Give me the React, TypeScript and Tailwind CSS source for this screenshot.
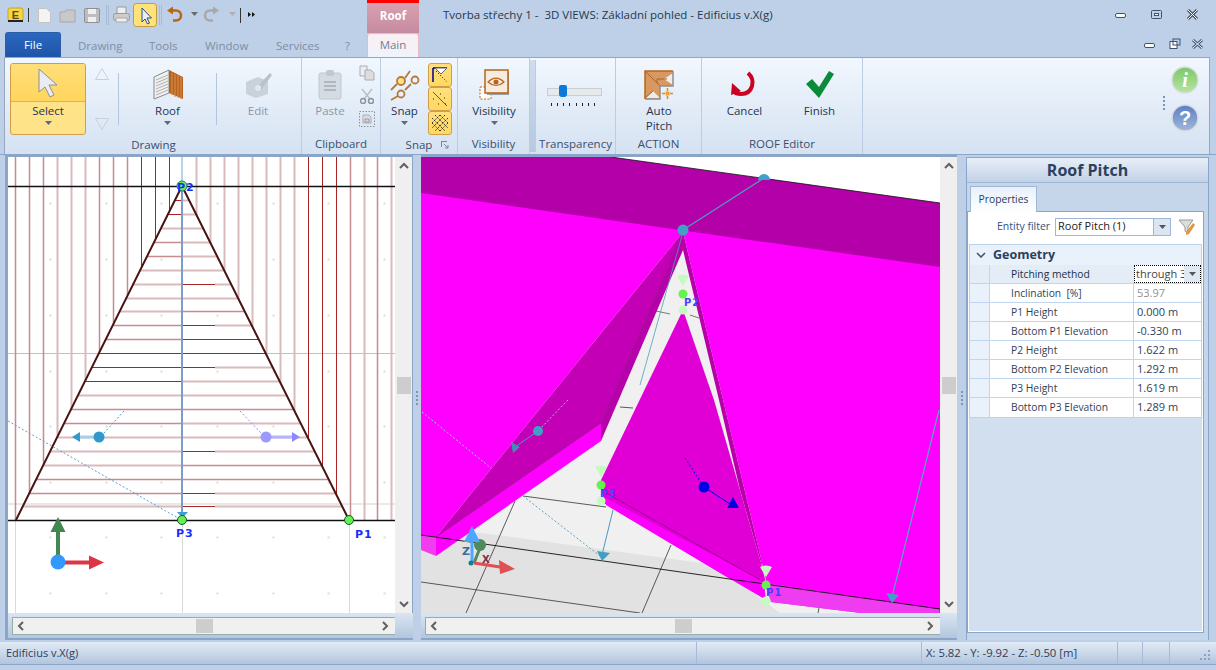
import React from "react";

const Caret = ({ c = "#5a6a80" }: { c?: string }) => (
  <svg width="7" height="4" viewBox="0 0 7 4"><path d="M0 0h7L3.5 4z" fill={c} /></svg>
);

const Big = ({ w, icon, lines, caret, dim }: { w: number; icon: React.ReactNode; lines: string[]; caret?: boolean; dim?: boolean }) => (
  <div className="flex shrink-0 flex-col items-center" style={{ width: w }}>
    <div className="flex h-[40px] w-full items-center justify-center pt-[3px]">{icon}</div>
    {lines.map((l) => (
      <div key={l} className={`h-[15px] text-center leading-[15px] ${dim ? "text-[#8d97a5]" : "text-[#24364f]"}`}>{l}</div>
    ))}
    {caret && <div className="mt-[3px] flex justify-center"><Caret /></div>}
  </div>
);

const Sep = () => <div className="my-[10px] w-px shrink-0 bg-[#b4c6de]" />;

const Group = ({ w, label, children, corner }: { w: number; label: string; children: React.ReactNode; corner?: boolean }) => (
  <div className="relative flex shrink-0 flex-col border-r border-[#bccde3]" style={{ width: w }}>
    <div className="flex h-[77px] pt-[5px]">{children}</div>
    <div className="h-[20px] text-center leading-[19px] text-[#3b4f6b]">{label}</div>
    {corner && (
      <svg className="absolute bottom-[5px] right-[8px]" width="8" height="8" viewBox="0 0 8 8">
        <path d="M0 .5h6M.5 0v6M3 3l4 4M7 4v3H4" stroke="#7c8896" fill="none" />
      </svg>
    )}
  </div>
);

const Qat = () => (
  <svg width="262" height="30" viewBox="0 0 262 30" className="shrink-0">
    <rect x="8" y="8" width="15" height="13" rx="2" fill="#f4d544" stroke="#c8a530" />
    <text x="15.5" y="19" fontSize="11" fontWeight="700" textAnchor="middle" fill="#5f4a10" fontFamily="Liberation Sans">E</text>
    <rect x="8" y="20" width="15" height="2" fill="#222" />
    <path d="M28.5 8v14" stroke="#333" />
    <path d="M38.5 8.5h8l4 4v10h-12z" fill="#f4f4f4" stroke="#c4c4c4" />
    <path d="M60 12h5l1-2h9v12H60z" fill="#c8c8c8" stroke="#a8a8a8" />
    <rect x="84.5" y="8.5" width="15" height="14" rx="1" fill="#bdbdbd" stroke="#909090" />
    <rect x="88" y="9" width="8" height="5" fill="#f0f0f0" /><rect x="88" y="17" width="8" height="5" fill="#f0f0f0" />
    <path d="M106.5 5v20M108.5 5v20" stroke="#a9bcd6" />
    <path d="M117 13V7h9v6" fill="#eee" stroke="#999" />
    <rect x="113.5" y="13.5" width="16" height="7" rx="2" fill="#ccc" stroke="#999" />
    <rect x="116" y="18" width="11" height="4" fill="#eee" stroke="#aaa" />
    <rect x="133.5" y="3.5" width="23" height="23" rx="3" fill="#ffe27a" stroke="#c79a3c" />
    <path d="M142 8v14l3-3 2.500 5 2-1-2.500-5h4.500z" fill="#e8eef6" stroke="#2f4f80" />
    <path d="M159.500 5v20M161.500 5v20" stroke="#a9bcd6" />
    <path d="M171 10.500h5a4.700 4.700 0 0 1 0 10h-3" fill="none" stroke="#b8651c" strokeWidth="2.500" />
    <path d="M167 10.500l6-4v8z" fill="#b8651c" />
    <path d="M191 13h7l-3.500 4z" fill="#6a6a6a" transform="translate(0 -1)" />
    <path d="M215 10.500h-5a4.700 4.700 0 0 0 0 10h3" fill="none" stroke="#a8a8a8" strokeWidth="2.500" />
    <path d="M219 10.500l-6-4v8z" fill="#a8a8a8" />
    <path d="M229 13h7l-3.500 4z" fill="#b0b0b0" transform="translate(0 -1)" />
    <path d="M240.500 8v15" stroke="#333" />
    <path d="M248 12v5l3-2.500zM252 12v5l3-2.500z" fill="#111" />
  </svg>
);

const grey = "#c9d1da";

const SnapBtn = ({ children }: { children: React.ReactNode }) => (
  <div className="flex h-[24px] w-[24px] items-center justify-center rounded-[3px] border border-[#cf9e46] bg-[linear-gradient(#ffe07e,#ffd860)]">{children}</div>
);

const vColors = ["m", "m", "m", "p", "p", "p", "m", "m", "m", "d", "d", "d", "b", "p", "p", "p", "p", "p", "p", "p", "p", "d", "d", "d", "m", "p", "m", "p"];
const hLeft = "ddpmmppppmmdddpmmpppmmp";
const hRight = "pppppphpmhddhppmpphmmhh";
const sty: Record<string, { s: string; w: number }> = {
  p: { s: "#d8bcbc", w: 2 },
  m: { s: "#c48c8c", w: 1.5 },
  d: { s: "#a52525", w: 1 },
};

const PlanView = () => {
  const xs = vColors.map((_, i) => Math.round(15.3 + 13.93 * i) + 0.5);
  const ys = Array.from({ length: 23 }, (_, j) => Math.round(200 + 13.93 * j) + 0.5);
  return (
    <svg viewBox="8 157 387 456" className="h-[456px] w-[387px] shrink-0 bg-white">
      {[50, 106, 161, 217, 273, 328, 384].flatMap((x) =>
        [203, 259, 315, 371, 426, 482, 537, 593].map((y) => <rect key={`${x}-${y}`} x={x - 0.5} y={y - 0.5} width="2" height="2" fill="#dcdcdc" />)
      )}
      <path d="M8 353.500h387" stroke="#c0c0c0" />
      <path d="M8 504h387" stroke="#e8e8e8" strokeWidth="2" />
      <path d="M15.500 520v93M182.500 520v93M349.500 520v93" stroke="#dadada" />
      {xs.map((x, i) => {
        if (vColors[i] === "b") return null;
        const y2 = x < 182 ? Math.min(520, 186 + ((182 - x) / 166) * 334) : Math.min(520, 186 + ((x - 182) / 167) * 334);
        const st = sty[vColors[i]];
        return <line key={x} x1={x} x2={x} y1={157} y2={y2} stroke={st.s} strokeWidth={st.w} />;
      })}
      {ys.map((y, j) => {
        const t = (y - 186) / 334;
        const L = 182 - t * 166;
        const R = 182 + t * 167;
        const sl = sty[hLeft[j]];
        const hr = hRight[j];
        return (
          <g key={y}>
            <line x1={L} x2={182} y1={y} y2={y} stroke={sl.s} strokeWidth={sl.w} />
            {hr === "h" ? (
              <>
                <line x1={182} x2={Math.min(215, 182 + (R - 182) * 0.75)} y1={y} y2={y} stroke="#a52525" />
                <line x1={Math.min(215, 182 + (R - 182) * 0.75)} x2={R} y1={y} y2={y} stroke="#d8bcbc" strokeWidth="2" />
              </>
            ) : (
              <line x1={182} x2={R} y1={y} y2={y} stroke={sty[hr].s} strokeWidth={sty[hr].w} />
            )}
          </g>
        );
      })}
      <path d="M8 186.500h387M8 520.500h387" stroke="#111" strokeWidth="1.500" />
      <path d="M16 520L182 186L349 520" fill="none" stroke="#4a1212" strokeWidth="2" />
      <path d="M182 157v29" stroke="#9cc4e4" strokeWidth="1.500" />
      <path d="M182 186v328" stroke="#7f9bc9" strokeWidth="2" />
      <path d="M177 512h11l-5.500 6z" fill="#3f9fd0" />
      <path d="M8 421L178 518" stroke="#5aa3d3" strokeDasharray="2 2" />
      <path d="M124 411L104 433" stroke="#3a9acb" strokeDasharray="2 2" />
      <path d="M240 411L261 433" stroke="#8e8ef5" strokeDasharray="2 2" />
      <path d="M80 437h19" stroke="#a4d0ea" strokeWidth="3" />
      <path d="M72 437l8-5v10z" fill="#3399cc" />
      <circle cx="99" cy="437" r="5.500" fill="#3399cc" />
      <path d="M266 437h27" stroke="#b5b5ff" strokeWidth="3" />
      <path d="M300 437l-8-5v10z" fill="#8a8aff" />
      <circle cx="266" cy="437" r="5.500" fill="#9a9aff" />
      <circle cx="182" cy="186" r="5" fill="#66ee55" stroke="#1e7a78" />
      <text x="177" y="190.500" fontSize="11" fontWeight="700" fill="#1a2dff" letterSpacing="1" fontFamily="DejaVu Sans">P2</text>
      <circle cx="182" cy="520" r="4.500" fill="#66ee55" stroke="#155a20" />
      <circle cx="349" cy="520" r="4.500" fill="#66ee55" stroke="#155a20" />
      <text x="176" y="537" fontSize="11" fontWeight="700" fill="#1a2dff" letterSpacing="1" fontFamily="DejaVu Sans">P3</text>
      <text x="355" y="538" fontSize="11" fontWeight="700" fill="#1a2dff" letterSpacing="1" fontFamily="DejaVu Sans">P1</text>
      <path d="M58 560v-30" stroke="#41874f" strokeWidth="4" />
      <path d="M58 517l7.500 15h-15z" fill="#41874f" />
      <path d="M62 562.500h27" stroke="#dc3545" strokeWidth="4" />
      <path d="M104 562.500l-15-7v14z" fill="#dc3545" />
      <circle cx="58" cy="562" r="7.500" fill="#3399ff" />
    </svg>
  );
};

const Handle = ({ x, y }: { x: number; y: number }) => (
  <g>
    <path d={`M${x - 6} ${y - 18}q6 -3 12 0l-6 10z`} fill="#c4fcc0" />
    <circle cx={x} cy={y + 16} r="4.500" fill="#c4fcc0" />
    <circle cx={x} cy={y} r="4.500" fill="#66f24c" />
  </g>
);

const PerspView = () => (
  <svg viewBox="421 157 519 456" className="h-[456px] w-[519px] shrink-0 bg-white">
    <path d="M421 157H940V613H421z" fill="#f0f0f0" />
    <path d="M482 533L716 565L780 613H421V535z" fill="#e2e2e2" />
    <path d="M515 501L466 613M523 496L606 507M671 545L642 613M421 582L640 613M620 407L633 408M819 608L818 613" stroke="#333" fill="none" strokeWidth="0.800" />
    <path d="M611 157H940V203z" fill="#fff" />
    {/* big magenta faces */}
    <path d="M421 188L683 226L683 232L436 537L421 535z" fill="#ff00ff" />
    <path d="M683 226L940 262V613H861L771 602L763 567L683 232z" fill="#ff00ff" />
    {/* translucent lower strips */}
    <path d="M421 535L436 537V556L421 550z" fill="#f23cf0" />
    <path d="M764 583L939 609V613H861L771 602z" fill="#f03cf0" />
    {/* band */}
    <path d="M421 157H611L940 203V267L421 193z" fill="#b400a8" />
    <path d="M611 157L940 203" stroke="#111" strokeWidth="0.800" />
    {/* wedge */}
    <path d="M436 537V556L601 441V423z" fill="#ff00ff" />
    <path d="M683 232L436 537L601 423z" fill="#c400b6" />
    <path d="M683 232L601 423V441L683 250z" fill="#b800aa" />
    <path d="M683 232L601 423M436 537L601 423" stroke="#90008a" strokeWidth="0.700" />
    {/* right dark strip */}
    <path d="M683 232L763 567L761 563L740 490L719 400L683 250z" fill="#b800aa" />
    {/* center */}
    <path d="M683 310L714 400L740 490L761 563L766 583L732 580L604 503L601 480z" fill="#e000d6" />
    <path d="M604 497L764 582L766 600L732 580L606 505z" fill="#fb00fb" />
    <path d="M606 493L764 582" stroke="#8c0080" strokeWidth="0.700" />
    <path d="M656 311L670 314M690 315L699 318" stroke="#444" strokeWidth="0.700" />
    <path d="M421 535L940 609" stroke="#111" strokeWidth="0.900" />
    {/* handles */}
    <path d="M764 178L683 230" stroke="#4aa0bd" strokeWidth="1.200" />
    <path d="M683 232L640 385" stroke="#4aa0bd" strokeWidth="0.800" />
    <path d="M758 180a6 6 0 0 1 12 0z" fill="#3fa0cc" />
    <circle cx="683" cy="230" r="5.500" fill="#3f9fc4" />
    <path d="M422 412L491 468" stroke="#9fd0e6" strokeDasharray="2 2" />
    <path d="M523 496L600 556" stroke="#5aa3c8" strokeDasharray="2 2" />
    <path d="M568 400L538 431" stroke="#8ed0dc" strokeDasharray="2 2" />
    <path d="M538 431L515 447" stroke="#3f9fc4" />
    <circle cx="538" cy="431" r="5" fill="#3f9fc4" />
    <path d="M511 442L520 447L513 453z" fill="#3f8fb4" />
    <path d="M613 510L602 555" stroke="#4a98c0" />
    <path d="M597 551L610 553L602 561z" fill="#3f9fc4" />
    <path d="M939 410L892 597" stroke="#4fa8c8" strokeWidth="1.200" />
    <path d="M886 593L899 595L892 603z" fill="#3f9fc4" />
    <path d="M685 458L704 487" stroke="#0000e0" strokeDasharray="2 2" />
    <path d="M704 487L730 504" stroke="#0000e0" />
    <path d="M733 497L739 508H727z" fill="#0000e0" />
    <circle cx="704" cy="487" r="5.500" fill="#0000e6" />
    <Handle x={683} y={294} />
    <Handle x={601} y={485} />
    <Handle x={766} y={585} />
    <text x="684" y="306" fontSize="10" fontWeight="700" fill="#4a40ff" letterSpacing="1" fontFamily="DejaVu Sans">P2</text>
    <text x="600" y="497" fontSize="10" fontWeight="700" fill="#4a40ff" letterSpacing="1" fontFamily="DejaVu Sans">P3</text>
    <text x="766" y="596" fontSize="10" fontWeight="700" fill="#4a40ff" letterSpacing="1" fontFamily="DejaVu Sans">P1</text>
    <circle cx="480" cy="545" r="6" fill="#4f8a5e" />
    <path d="M474 563L480 548" stroke="#4f8a5e" strokeWidth="3" />
    <path d="M474 563L500 567" stroke="#e05050" strokeWidth="3" />
    <path d="M515 569L499 560L500 574z" fill="#e05050" />
    <path d="M472 563V540" stroke="#4da6ff" strokeWidth="3" />
    <path d="M472 526L480 542H464z" fill="#4da6ff" />
    <circle cx="471" cy="563" r="2.500" fill="#118090" />
    <text x="462" y="555" fontSize="11" fontWeight="700" fill="#3a6a9a" fontFamily="DejaVu Sans">Z</text>
    <text x="482" y="563" fontSize="10" fontWeight="700" fill="#8a3040" fontFamily="DejaVu Sans">X</text>
  </svg>
);

const Chev = ({ d }: { d: "u" | "d" | "l" | "r" }) => {
  const p = { u: "M1 6L5 2l4 4", d: "M1 2l4 4 4-4", l: "M6 1L2 5l4 4", r: "M2 1l4 4-4 4" }[d];
  return <svg width="10" height="10" viewBox="0 0 10 10" className="shrink-0"><path d={p} fill="none" stroke="#606060" strokeWidth="2" /></svg>;
};

const VScroll = () => (
  <div className="flex h-[456px] w-[17px] shrink-0 flex-col items-center bg-[#efefef] pt-[5px]">
    <Chev d="u" />
    <div className="mt-[205px] h-[17px] w-[14px] bg-[#cdcdcd]" />
    <div className="mt-[206px]"><Chev d="d" /></div>
  </div>
);

const HScroll = ({ w, pl }: { w: number; pl: number }) => (
  <div className="flex h-[25px] items-center bg-[linear-gradient(#dae5f2,#b3c6de)]" style={{ paddingLeft: pl }}>
    <div className="flex h-[18px] items-center justify-between border border-r-0 border-[#99aaaa] bg-[#f0f0f0] px-[4px]" style={{ width: w }}>
      <Chev d="l" />
      <div className="h-[14px] w-[17px] bg-[#cdcdcd]" />
      <Chev d="r" />
    </div>
  </div>
);

const Grip = () => (
  <div className="flex w-full flex-col items-center gap-[2px]">
    {[0, 1, 2, 3].map((i) => <div key={i} className="h-[2px] w-[2px] bg-[#7f94b3]" />)}
  </div>
);

const rows = [
  ["Inclination  [%]", "53.97"],
  ["P1 Height", "0.000 m"],
  ["Bottom P1 Elevation", "-0.330 m"],
  ["P2 Height", "1.622 m"],
  ["Bottom P2 Elevation", "1.292 m"],
  ["P3 Height", "1.619 m"],
  ["Bottom P3 Elevation", "1.289 m"],
];

const Props = () => (
  <div className="mt-[2px] flex h-[483px] w-[243px] shrink-0 flex-col border-x border-t border-[#8aa5c8] bg-[#c6d6ea]">
    <div className="h-[25px] shrink-0 border-b border-[#9fb6d4] bg-[linear-gradient(#e8eff8,#c1d1e6)] text-center text-[16px] font-bold leading-[24px] text-[#2d415e]">Roof Pitch</div>
    <div className="shrink-0 pl-[3px] pt-[2px]">
      <div className="relative top-px z-10 h-[26px] w-[67px] border border-b-0 border-[#9fb6d4] bg-[linear-gradient(#e8f0fa,#ffffff)] text-center text-[10.300px] leading-[24px] text-[#2d415e]">Properties</div>
    </div>
    <div className="mb-[7px] mr-[4px] flex min-h-0 flex-1 flex-col border border-[#8aa5c8] bg-white p-px">
      <div className="flex h-[31px] shrink-0 items-center bg-white pb-[4px] pl-[28px]">
        <span className="w-[53px] whitespace-nowrap text-[10.500px] text-[#34527a]">Entity filter</span>
        <div className="ml-[5px] flex h-[18px] w-[116px] items-center justify-between border border-[#9fb6d4] pl-[2px] text-[11px] text-[#222]">
          <span>Roof Pitch (1)</span>
          <span className="flex h-full w-[17px] items-center justify-center border-l border-[#9fb6d4] bg-[#dce6f3]"><Caret c="#556" /></span>
        </div>
        <svg className="ml-[7px]" width="18" height="16" viewBox="0 0 18 16">
          <path d="M1 1h14l-5 7v6l-3-2V8z" fill="#dcdcdc" stroke="#999" />
          <path d="M8 13l7-9 2 2-6 9-3 1z" fill="#e09840" />
        </svg>
      </div>
      <div className="flex-1 bg-[#d2dfef]">
        <div className="w-[233px] border border-[#c0d2e8] bg-[#e9f1fa] text-[10.300px] leading-[18px]">
          <div className="flex h-[20px] items-center pl-[6px] text-[#2d3f5a]">
            <svg width="10" height="6" viewBox="0 0 10 6"><path d="M1 1l4 4 4-4" stroke="#3f546f" strokeWidth="1.500" fill="none" /></svg>
            <span className="ml-[7px] text-[12.500px] font-bold">Geometry</span>
          </div>
          <div className="flex h-[19px] border-b border-[#c0d6f0] bg-[#e4ecf6]">
            <div className="ml-[19px] w-[145px] border-l border-[#c0d6f0] pl-[21px] text-[#20304a]">Pitching method</div>
            <div className="flex w-[67px] items-center justify-between border border-dotted border-black bg-white pl-px text-[#444]">
              <span className="w-[48px] overflow-hidden whitespace-nowrap text-[11px]">through 3</span>
              <span className="flex h-full w-[16px] items-center justify-center bg-[#e0e8f2]"><Caret c="#556" /></span>
            </div>
          </div>
          {rows.map(([a, b]) => (
            <div key={a} className="flex h-[19px] border-b border-[#c0d6f0] last:border-b-0">
              <div className="ml-[19px] w-[145px] whitespace-pre border-x border-[#c0d6f0] bg-white pl-[21px] text-[#2f3f58]">{a}</div>
              <div className={`flex-1 bg-white pl-[3px] text-[11px] ${a.startsWith("Incl") ? "text-[#909090]" : "text-[#2f3f58]"}`}>{b}</div>
            </div>
          ))}
        </div>
      </div>
    </div>
  </div>
);

export default function App() {
  return (
    <div className="flex h-[670px] w-[1216px] flex-col overflow-hidden bg-[#bdd0e8] font-['Open_Sans',sans-serif] text-[11.500px]">
      {/* header */}
      <div className="flex h-[57px] shrink-0">
        <div className="flex w-[367px] shrink-0 flex-col">
          <Qat />
          <div className="mt-px flex h-[26px] items-center pl-[5px] text-[#7f8ea2]">
            <div className="h-[25px] w-[56px] rounded-t-[3px] border border-b-0 border-[#2a5fa8] bg-[linear-gradient(#2c68c0,#1d54a8)] text-center leading-[23px] text-white">File</div>
            <span className="ml-[17px] w-[71px] pt-[3px]">Drawing</span>
            <span className="w-[56px] pt-[3px]">Tools</span>
            <span className="w-[71px] pt-[3px]">Window</span>
            <span className="w-[69px] pt-[3px]">Services</span>
            <span className="pt-[3px]">?</span>
          </div>
        </div>
        <div className="flex w-[52px] shrink-0 flex-col">
          <div className="h-[33px] border-t-[3px] border-[#ff0000] bg-[linear-gradient(#d8a0b0,#c68ba0)] text-center font-bold leading-[26px] text-white">Roof</div>
          <div className="h-[24px] rounded-t-[3px] border border-b-0 border-[#e8b8c4] bg-[linear-gradient(#fbeef2,#eef4fc)] text-center leading-[22px] text-[#6f7f95]">Main</div>
        </div>
        <div className="flex flex-1 flex-col">
          <div className="flex h-[30px] items-center pl-[24px] text-[#26384f]">
            <span className="whitespace-pre">Tvorba střechy 1 -  3D VIEWS: Základní pohled - Edificius v.X(g)</span>
            <svg className="ml-auto mr-[17px]" width="84" height="12" viewBox="0 0 84 12">
              <rect x="0.500" y="4.500" width="10" height="4" rx="1.500" fill="#fff" stroke="#3f536f" />
              <rect x="36.500" y="1.500" width="10" height="8" rx="1" fill="none" stroke="#3f536f" /><rect x="39.500" y="4.500" width="4" height="2" fill="#fff" stroke="#3f536f" />
              <path d="M73 1l9 9M82 1l-9 9" stroke="#3f536f" strokeWidth="3" /><path d="M73 1l9 9M82 1l-9 9" stroke="#fff" strokeWidth="1" />
            </svg>
          </div>
          <div className="flex h-[27px] items-center justify-end pr-[12px]">
            <svg width="60" height="12" viewBox="0 0 60 12">
              <rect x="0.500" y="5.500" width="10" height="4" rx="1.500" fill="#fff" stroke="#3f536f" />
              <rect x="26" y="3.500" width="7" height="7" fill="#fff" stroke="#3f536f" /><rect x="29" y="1" width="7" height="6" fill="none" stroke="#3f536f" />
              <path d="M49 2l9 8M58 2l-9 8" stroke="#3f536f" strokeWidth="3" /><path d="M49 2l9 8M58 2l-9 8" stroke="#fff" strokeWidth="1" />
            </svg>
          </div>
        </div>
      </div>

      {/* ribbon */}
      <div className="relative ml-[4px] flex h-[97px] w-[1206px] shrink-0 border-x border-t border-[#9aa5c0] bg-[linear-gradient(#f1f7fe,#d5e2f2)] pl-[1px]">
        <Group w={296} label="Drawing">
          <div className="ml-[4px] flex h-[72px] w-[76px] shrink-0 flex-col overflow-hidden rounded-[3px] border border-[#cf9e46] bg-[#ffe388]">
            <div className="flex h-[38px] items-center justify-center border-b border-[#dcb354] bg-[linear-gradient(#ffdf7a,#ffd55c)]">
              <svg width="20" height="30" viewBox="0 0 20 30"><path d="M1 1v23l6-5 5 10 4-2-5-10h8z" fill="#e9edf3" stroke="#8a8f96" /></svg>
            </div>
            <div className="text-center leading-[18px] text-[#24364f]">Select</div>
            <div className="flex justify-center pt-[1px]"><Caret /></div>
          </div>
          <div className="flex w-[32px] shrink-0 flex-col items-center justify-between py-[5px]">
            <svg width="14" height="12" viewBox="0 0 14 12"><path d="M7 .5L13.500 11.500H.5z" fill="none" stroke="#c6d0dc" /></svg>
            <svg width="14" height="12" viewBox="0 0 14 12"><path d="M7 11.500L13.500 .5H.5z" fill="none" stroke="#c6d0dc" /></svg>
          </div>
          <Sep />
          <Big w={97} lines={["Roof"]} caret icon={
            <svg width="32" height="32" viewBox="0 0 32 32">
              <path d="M2 8L17 1V24L2 30z" fill="#f0f0f0" stroke="#8a8a8a" />
              <path d="M4 11L16 6M4 14L16 9M4 17L16 12M4 20L16 15M4 23L16 18M4 26L16 21" stroke="#b0b0b0" />
              <path d="M17 1L31 8V30L17 24z" fill="#b8621f" />
              <path d="M20 4v22M23 5v23M26 6v23M29 7v23" stroke="#d9924e" />
            </svg>
          } />
          <Sep />
          <Big w={82} lines={["Edit"]} dim icon={
            <svg width="30" height="28" viewBox="0 0 30 28">
              <path d="M3 11l12-5 10 4v13l-12 4-10-4z" fill={grey} />
              <path d="M14 16L27 2l2 2L18 19z" fill="#b8c2cc" />
              <circle cx="15" cy="17" r="3" fill="#e2e7ec" />
            </svg>
          } />
        </Group>
        <Group w={79} label="Clipboard">
          <Big w={56} lines={["Paste"]} dim icon={
            <svg width="24" height="30" viewBox="0 0 24 30">
              <rect x="1" y="3" width="22" height="26" rx="2" fill="#d4dbe2" stroke="#c0c8d0" />
              <rect x="8" y="0" width="8" height="6" rx="2" fill="#c0c8d0" />
              <rect x="6" y="11" width="12" height="2" fill="#aeb6c0" /><rect x="6" y="15" width="12" height="2" fill="#aeb6c0" /><rect x="6" y="19" width="12" height="2" fill="#aeb6c0" />
            </svg>
          } />
          <div className="flex w-[18px] flex-col items-center gap-[7px] pt-[2px]">
            <svg width="16" height="16" viewBox="0 0 16 16"><path d="M1 1h7v10H1z" fill="#eee" stroke="#aab" /><path d="M6 5h6l3 3v7H6z" fill="#ddd" stroke="#aab" /></svg>
            <svg width="14" height="16" viewBox="0 0 14 16"><path d="M2 1l8 10M12 1L4 11" stroke="#b8c0ca" strokeWidth="1.500" /><circle cx="3" cy="13" r="2.500" fill="none" stroke="#8a94a0" strokeWidth="1.500" /><circle cx="11" cy="13" r="2.500" fill="none" stroke="#8a94a0" strokeWidth="1.500" /></svg>
            <svg width="16" height="16" viewBox="0 0 16 16"><rect x=".5" y=".5" width="15" height="15" fill="none" stroke="#8a94a0" strokeDasharray="1.500 1.500" /><path d="M4 4h6l2 2v6H4z" fill="#ddd" stroke="#aab" /><path d="M6 8h4v3H6z" fill="none" stroke="#99a" /></svg>
          </div>
        </Group>
        <Group w={77} label="Snap" corner>
          <Big w={47} lines={["Snap"]} caret icon={
            <svg width="30" height="32" viewBox="0 0 30 32">
              <g stroke="#b5793a" strokeWidth="1.800" fill="none"><path d="M1 21l6-6M15 9l5-7M15 21l6-6M1 31l7-4" /><circle cx="25" cy="11" r="3.500" /><circle cx="11" cy="25" r="3.500" /></g>
              <circle cx="11" cy="12" r="4" fill="#ffe07e" stroke="#b5793a" strokeWidth="1.800" />
            </svg>
          } />
          <div className="flex flex-col">
            <SnapBtn><svg width="16" height="16" viewBox="0 0 16 16"><path d="M1 1h14M1 1v14" stroke="#00008a" strokeWidth="1.500" /><path d="M3 1h12l-6 6z" fill="#fff" stroke="#667" /><path d="M4 4l11 11" stroke="#111" strokeDasharray="1 2" /></svg></SnapBtn>
            <SnapBtn><svg width="16" height="16" viewBox="0 0 16 16"><path d="M1 1l14 14" stroke="#0a7d8d" /><path d="M1 8l1 0M8 3h1M12 7h1M6 13h1M13 13h1" stroke="#222" /></svg></SnapBtn>
            <SnapBtn><svg width="16" height="16" viewBox="0 0 16 16"><path d="M0 3l13 13M0 8l8 8M3 0l13 13M8 0l8 8M16 3L3 16M16 8l-8 8M13 0L0 13M8 0L0 8" stroke="#333" strokeDasharray="1.500 1" /></svg></SnapBtn>
          </div>
        </Group>
        <Group w={72} label="Visibility">
          <Big w={72} lines={["Visibility"]} caret icon={
            <svg width="30" height="32" viewBox="0 0 30 32">
              <rect x="1" y="18" width="11" height="12" fill="#fff" stroke="#b5651d" strokeDasharray="2 1.500" />
              <rect x="8" y="3" width="23" height="23" fill="#a0a0a0" />
              <rect x="6" y="1" width="23" height="23" fill="#f7ebdf" stroke="#b5651d" strokeWidth="1.500" />
              <path d="M9 13q8-8 16 0q-8 7-16 0z" fill="none" stroke="#b5651d" strokeWidth="1.200" /><circle cx="17" cy="13" r="2.500" fill="#b5651d" />
            </svg>
          } />
        </Group>
        <div className="my-[2px] w-[6px] shrink-0 border-r border-[#bccde3] bg-[linear-gradient(#cfdced,#b7c9e0)]" />
        <Group w={80} label="Transparency">
          <div className="w-full pl-[11px] pt-[25px]">
            <div className="relative h-[8px] w-[55px] border border-[#c8ced4] bg-[#e6eaec]">
              <div className="absolute left-[11px] top-[-4px] h-[12px] w-[8px] rounded-b-[3px] rounded-t-[2px] bg-[#0a79d8]" />
            </div>
            <div className="mt-[7px] flex w-[48px] justify-between pl-[4px]">
              {[0, 1, 2, 3, 4, 5, 6, 7].map((i) => <div key={i} className="h-[3px] w-px bg-[#222]" />)}
            </div>
          </div>
        </Group>
        <Group w={86} label="ACTION">
          <Big w={86} lines={["Auto", "Pitch"]} icon={
            <svg width="30" height="30" viewBox="0 0 30 30">
              <path d="M1 1h28v15H16v13H1z" fill="#d9985f" />
              <path d="M29 3v12l-9-6z" fill="#ececec" />
              <path d="M2 28h14L9 21z" fill="#ececec" />
              <path d="M1 1L13 13M13 13V9h10M13 13l3 3M1 28l8-7" stroke="#a8632a" fill="none" />
              <path d="M1 29V1h28" stroke="#b5651d" fill="none" strokeWidth="1.500" />
              <path d="M29 1v15H16v13H1" stroke="#8f8f8f" fill="none" strokeWidth="1.500" />
              <path d="M23.500 18v11M18 23.500h11" stroke="#e08a1a" strokeWidth="1.500" strokeDasharray="3 1" />
              <rect x="21.500" y="21.500" width="4" height="4" fill="#f0a030" />
            </svg>
          } />
        </Group>
        <Group w={161} label="ROOF Editor">
          <Big w={85} lines={["Cancel"]} icon={
            <svg width="30" height="28" viewBox="0 0 30 28">
              <path d="M18 2c8 7 5 21-7 21-4 0-6-1-8-3" fill="none" stroke="#cc0020" strokeWidth="4" />
              <path d="M2 12l9 8-10 4z" fill="#cc0020" />
            </svg>
          } />
          <Big w={65} lines={["Finish"]} icon={
            <svg width="28" height="27" viewBox="0 0 28 27">
              <path d="M0 13l6-5 7 8L23 0l5 3L13 27z" fill="#0a8a3a" />
            </svg>
          } />
        </Group>
        <div className="flex flex-1 justify-end">
          <div className="mr-[4px] mt-[38px] w-[3px]"><Grip /></div>
          <div className="mr-[8px] flex w-[32px] flex-col items-center gap-[10px] pt-[8px]">
            <svg width="28" height="28" viewBox="0 0 28 28">
              <defs><linearGradient id="gi" x1="0" y1="0" x2="0" y2="1"><stop offset="0" stopColor="#7bc868" /><stop offset="1" stopColor="#b8e4a4" /></linearGradient></defs>
              <circle cx="14" cy="14" r="13" fill="url(#gi)" stroke="#d8dde0" strokeWidth="1.500" />
              <text x="14" y="21" fontSize="20" fontWeight="700" fontStyle="italic" textAnchor="middle" fill="#fff" fontFamily="Liberation Serif">i</text>
            </svg>
            <svg width="28" height="28" viewBox="0 0 28 28">
              <defs><linearGradient id="gh" x1="0" y1="0" x2="0" y2="1"><stop offset="0" stopColor="#5b7fc0" /><stop offset="1" stopColor="#a2b8dc" /></linearGradient></defs>
              <circle cx="14" cy="14" r="13" fill="url(#gh)" stroke="#d8dde0" strokeWidth="1.500" />
              <text x="14" y="21" fontSize="20" fontWeight="700" textAnchor="middle" fill="#fff" fontFamily="Liberation Sans">?</text>
            </svg>
          </div>
        </div>
      </div>

      {/* panes */}
      <div className="flex h-[488px] shrink-0 border-t border-[#8aa5c8] pl-[5px]">
        <div className="h-[485px] w-[408px] shrink-0 border-b-[2px] border-l-[3px] border-t-[2px] border-[#8aa5c8]">
          <div className="flex"><PlanView /><VScroll /><div className="w-px bg-[#8aa5c8]" /></div>
          <HScroll w={383} pl={4} />
        </div>
        <div className="flex h-[485px] w-[8px] shrink-0 items-center"><Grip /></div>
        <div className="h-[485px] w-[536px] shrink-0 border-b-[2px] border-t-[2px] border-[#8aa5c8]">
          <div className="flex"><PerspView /><VScroll /></div>
          <HScroll w={515} pl={4} />
        </div>
        <div className="flex h-[485px] w-[9px] shrink-0 items-center"><Grip /></div>
        <Props />
      </div>

      {/* status */}
      <div className="flex h-[23px] shrink-0 items-center border-b border-[#8aa5c8] bg-[linear-gradient(#e2ebf6,#b2c5de)] pl-[6px] text-[11.300px] text-[#2b3f5c]">
        <span className="w-[690px] text-[11px]">Edificius v.X(g)</span>
        <div className="h-full w-[225px] border-l border-[#a9bbd2]" />
        <div className="flex h-full w-[196px] items-center border-l border-[#a9bbd2] pl-[4px]">X: 5.82 - Y: -9.92 - Z: -0.50 [m]</div>
        <div className="h-full w-[25px] border-l border-[#a9bbd2]" />
        <div className="h-full w-[27px] border-l border-[#a9bbd2]" />
        <div className="flex h-full flex-1 items-end justify-end border-l border-[#a9bbd2] pb-[4px] pr-[6px]">
          <svg width="10" height="10" viewBox="0 0 10 10"><path d="M8 0h2v2H8zM4 4h2v2H4zM8 4h2v2H8zM0 8h2v2H0zM4 8h2v2H4zM8 8h2v2H8z" fill="#8ea2bd" /></svg>
        </div>
      </div>
    </div>
  );
}
